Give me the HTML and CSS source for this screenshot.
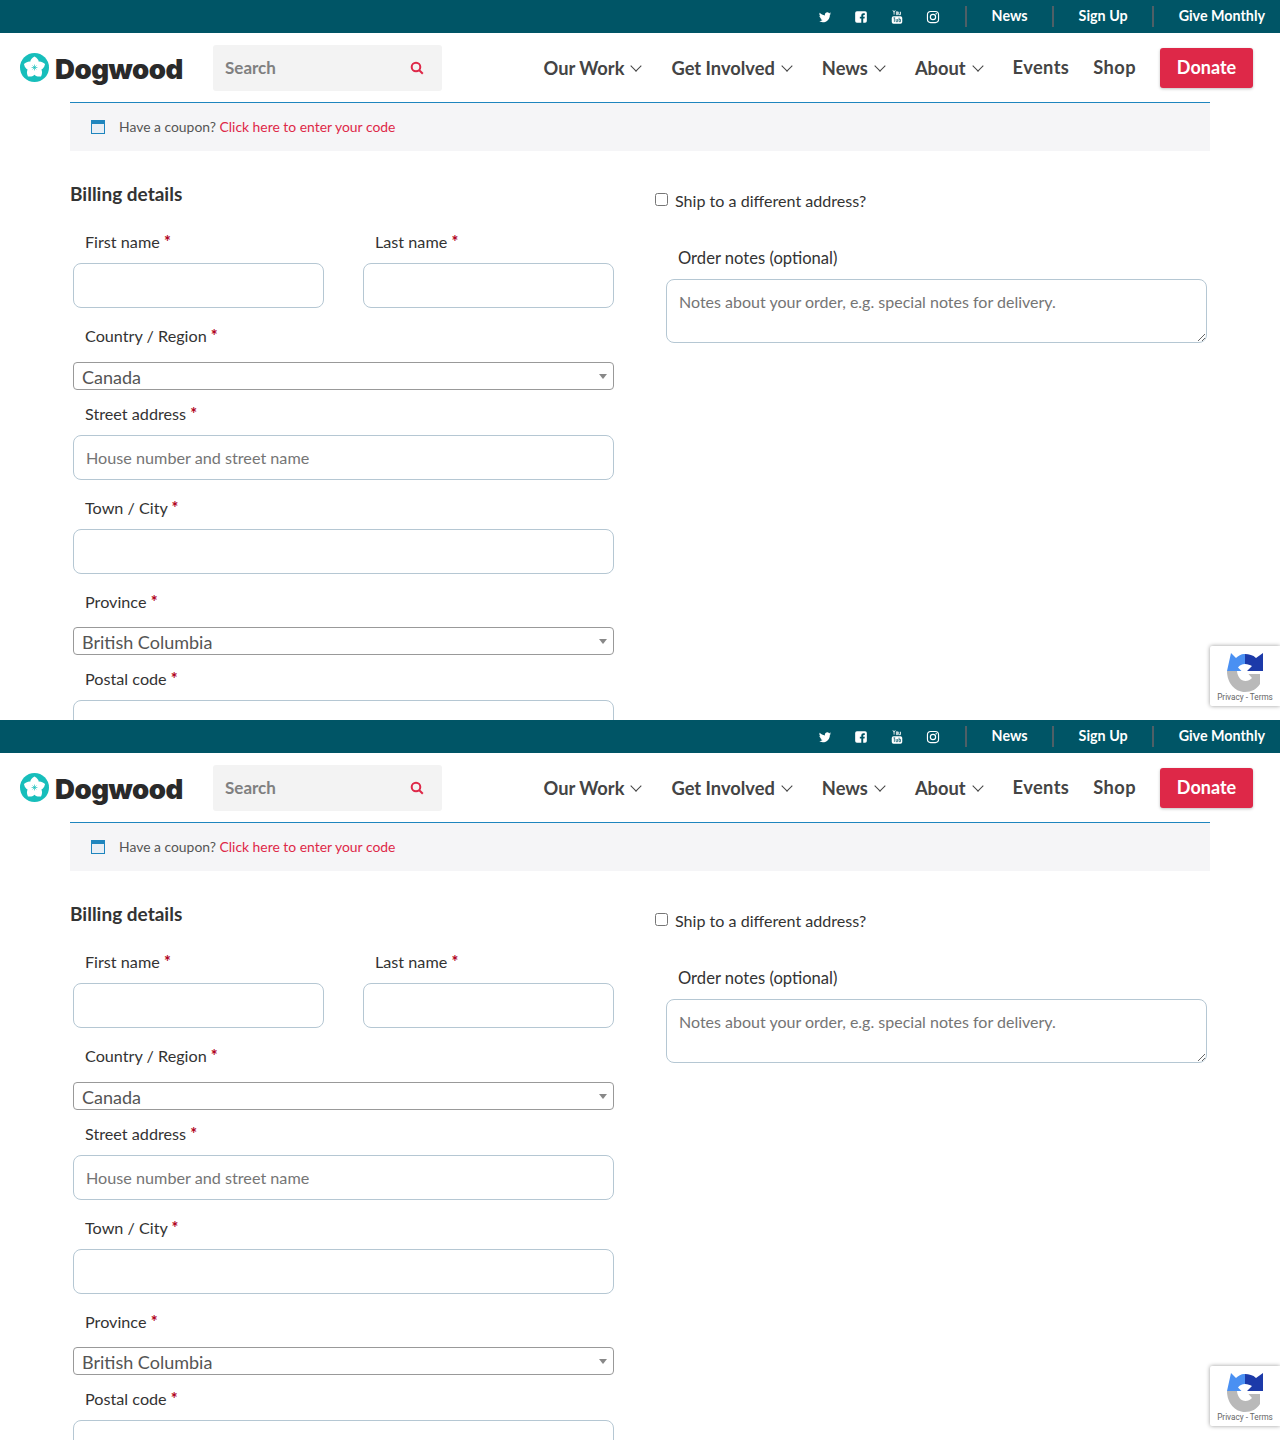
FILE: index.html
```html
<!DOCTYPE html>
<html lang="en">
<head>
<meta charset="UTF-8">
<meta name="viewport" content="width=device-width, initial-scale=1.0">
<title>Checkout - Dogwood</title>
<link rel="stylesheet" href="styles.css">
</head>
<body>

<section class="frame">
  <div class="topbar">
    <div class="social">
      <svg class="social-icon" viewBox="0 0 24 24"><path d="M22.46 6c-.77.35-1.6.58-2.46.69.88-.53 1.56-1.37 1.88-2.38-.83.5-1.75.85-2.72 1.05C18.37 4.5 17.26 4 16 4c-2.35 0-4.27 1.92-4.27 4.29 0 .34.04.67.11.98C8.28 9.09 5.11 7.38 3 4.79c-.37.63-.58 1.37-.58 2.15 0 1.49.75 2.81 1.91 3.56-.71 0-1.37-.2-1.95-.5v.03c0 2.08 1.48 3.82 3.44 4.21a4.22 4.22 0 0 1-1.93.07 4.28 4.28 0 0 0 4 2.98 8.521 8.521 0 0 1-5.33 1.84c-.34 0-.68-.02-1.02-.06C3.44 20.29 5.7 21 8.12 21 16 21 20.33 14.46 20.33 8.79c0-.19 0-.37-.01-.56.84-.6 1.56-1.36 2.14-2.23z"/></svg>
      <svg class="social-icon" viewBox="0 0 24 24"><path d="M19 2H5a3 3 0 0 0-3 3v14a3 3 0 0 0 3 3h7.500v-7.500H10v-3h2.500V9a3.500 3.500 0 0 1 3.500-3.500h2.500v3H17c-.8 0-1.200.4-1.200 1.200v1.800h2.700l-.5 3h-2.200V22H19a3 3 0 0 0 3-3V5a3 3 0 0 0-3-3z"/></svg>
      <svg class="social-icon" viewBox="0 0 24 24"><rect x="3" y="10.500" width="18" height="13" rx="3"/><path class="tube-lines" d="M6 13.500h3M7.500 13.500v7M10.500 15.500v4.500h2.500v-4.500M15.500 13v7h2.500v-4h-2.500"/><path class="you-lines" d="M5 0.500l2 3.500 2-3.500M7 4v4M11 3h2v5h-2zM15 3v5h3v-5"/></svg>
      <svg class="social-icon outline" viewBox="0 0 24 24"><rect x="2.500" y="2.500" width="19" height="19" rx="5.500"/><circle cx="12" cy="12" r="4.500"/><circle class="dot" cx="17.500" cy="6.500" r="1.300"/></svg>
    </div>
    <a class="top-link" href="#">News</a>
    <a class="top-link" href="#">Sign Up</a>
    <a class="top-link" href="#">Give Monthly</a>
  </div>

  <header class="header">
    <a class="logo" href="#">
      <svg class="logo-mark" viewBox="0 0 30 30">
        <circle cx="15" cy="15" r="15" fill="#17bebb"/>
        <g fill="#fff">
          <path d="M15 16C9 12 9 7 15 3.500C21 7 21 12 15 16z"/>
          <path d="M15 16C9 12 9 7 15 3.500C21 7 21 12 15 16z" transform="rotate(72 15 15)"/>
          <path d="M15 16C9 12 9 7 15 3.500C21 7 21 12 15 16z" transform="rotate(144 15 15)"/>
          <path d="M15 16C9 12 9 7 15 3.500C21 7 21 12 15 16z" transform="rotate(216 15 15)"/>
          <path d="M15 16C9 12 9 7 15 3.500C21 7 21 12 15 16z" transform="rotate(288 15 15)"/>
        </g>
        <path d="M15 12v6M12 15h6M13 13l4 4M17 13l-4 4" stroke="#17bebb" stroke-width="0.700"/>
      </svg>
      <span class="logo-text">Dogwood</span>
    </a>
    <div class="search">
      <span class="search-text">Search</span>
      <svg class="search-icon" viewBox="0 0 14 14"><circle cx="6" cy="6" r="4.300"/><path d="M9 9l3.800 3.800"/></svg>
    </div>
    <nav class="nav">
      <a class="nav-link caret" href="#">Our Work</a>
      <a class="nav-link caret" href="#">Get Involved</a>
      <a class="nav-link caret" href="#">News</a>
      <a class="nav-link caret" href="#">About</a>
      <a class="nav-link nav-plain" href="#">Events</a>
      <a class="nav-link nav-plain" href="#">Shop</a>
      <a class="donate" href="#">Donate</a>
    </nav>
  </header>

  <main class="checkout">
    <div class="coupon">
      <span class="coupon-icon"></span>
      <span class="coupon-text">Have a coupon? <a class="coupon-link" href="#">Click here to enter your code</a></span>
    </div>

    <div class="columns">
      <div class="billing">
        <h3 class="billing-title">Billing details</h3>
        <div class="name-row">
          <div class="field">
            <label class="field-label">First name <abbr class="req">*</abbr></label>
            <input class="text-input" type="text">
          </div>
          <div class="field">
            <label class="field-label">Last name <abbr class="req">*</abbr></label>
            <input class="text-input" type="text">
          </div>
        </div>
        <div class="field field-select field-country">
          <label class="field-label">Country / Region <abbr class="req">*</abbr></label>
          <span class="select-box">Canada</span>
        </div>
        <div class="field">
          <label class="field-label">Street address <abbr class="req">*</abbr></label>
          <input class="text-input" type="text" placeholder="House number and street name">
        </div>
        <div class="field">
          <label class="field-label">Town / City <abbr class="req">*</abbr></label>
          <input class="text-input" type="text">
        </div>
        <div class="field field-select">
          <label class="field-label">Province <abbr class="req">*</abbr></label>
          <span class="select-box">British Columbia</span>
        </div>
        <div class="field">
          <label class="field-label">Postal code <abbr class="req">*</abbr></label>
          <input class="text-input" type="text">
        </div>
      </div>

      <div class="shipping">
        <label class="ship-toggle"><input class="ship-check" type="checkbox"> Ship to a different address?</label>
        <label class="notes-label">Order notes (optional)</label>
        <textarea class="notes" placeholder="Notes about your order, e.g. special notes for delivery."></textarea>
      </div>
    </div>
  </main>

  <div class="recaptcha">
    <svg class="recaptcha-icon" viewBox="0 0 37 39">
      <path fill="#b9b9b9" d="M0 18h10c.5 6 4 10 8.500 10 2.500 0 4.500-1 6.500-3l-3.500-4H33v10c-3 5-8.500 8-15 8C8 39 0 30 0 18z"/>
      <path fill="#4a90f2" d="M4 0l5 5c2.500-2.500 6-4.500 9-4v10c-3 0-5.500 1.500-7 3.500l3.500 3.500H0z"/>
      <path fill="#1c3aa9" d="M18 1c4 0 8 1 11 4l7-5v18H20l5-5c-2-1-4-2-7-2z"/>
    </svg>
    <span class="recaptcha-text">Privacy - Terms</span>
  </div>
</section>

<section class="frame">
  <div class="topbar">
    <div class="social">
      <svg class="social-icon" viewBox="0 0 24 24"><path d="M22.46 6c-.77.35-1.6.58-2.46.69.88-.53 1.56-1.37 1.88-2.38-.83.5-1.75.85-2.72 1.05C18.37 4.5 17.26 4 16 4c-2.35 0-4.27 1.92-4.27 4.29 0 .34.04.67.11.98C8.28 9.09 5.11 7.38 3 4.79c-.37.63-.58 1.37-.58 2.15 0 1.49.75 2.81 1.91 3.56-.71 0-1.37-.2-1.95-.5v.03c0 2.08 1.48 3.82 3.44 4.21a4.22 4.22 0 0 1-1.93.07 4.28 4.28 0 0 0 4 2.98 8.521 8.521 0 0 1-5.33 1.84c-.34 0-.68-.02-1.02-.06C3.44 20.29 5.7 21 8.12 21 16 21 20.33 14.46 20.33 8.79c0-.19 0-.37-.01-.56.84-.6 1.56-1.36 2.14-2.23z"/></svg>
      <svg class="social-icon" viewBox="0 0 24 24"><path d="M19 2H5a3 3 0 0 0-3 3v14a3 3 0 0 0 3 3h7.500v-7.500H10v-3h2.500V9a3.500 3.500 0 0 1 3.500-3.500h2.500v3H17c-.8 0-1.200.4-1.200 1.200v1.800h2.700l-.5 3h-2.200V22H19a3 3 0 0 0 3-3V5a3 3 0 0 0-3-3z"/></svg>
      <svg class="social-icon" viewBox="0 0 24 24"><rect x="3" y="10.500" width="18" height="13" rx="3"/><path class="tube-lines" d="M6 13.500h3M7.500 13.500v7M10.500 15.500v4.500h2.500v-4.500M15.500 13v7h2.500v-4h-2.500"/><path class="you-lines" d="M5 0.500l2 3.500 2-3.500M7 4v4M11 3h2v5h-2zM15 3v5h3v-5"/></svg>
      <svg class="social-icon outline" viewBox="0 0 24 24"><rect x="2.500" y="2.500" width="19" height="19" rx="5.500"/><circle cx="12" cy="12" r="4.500"/><circle class="dot" cx="17.500" cy="6.500" r="1.300"/></svg>
    </div>
    <a class="top-link" href="#">News</a>
    <a class="top-link" href="#">Sign Up</a>
    <a class="top-link" href="#">Give Monthly</a>
  </div>

  <header class="header">
    <a class="logo" href="#">
      <svg class="logo-mark" viewBox="0 0 30 30">
        <circle cx="15" cy="15" r="15" fill="#17bebb"/>
        <g fill="#fff">
          <path d="M15 16C9 12 9 7 15 3.500C21 7 21 12 15 16z"/>
          <path d="M15 16C9 12 9 7 15 3.500C21 7 21 12 15 16z" transform="rotate(72 15 15)"/>
          <path d="M15 16C9 12 9 7 15 3.500C21 7 21 12 15 16z" transform="rotate(144 15 15)"/>
          <path d="M15 16C9 12 9 7 15 3.500C21 7 21 12 15 16z" transform="rotate(216 15 15)"/>
          <path d="M15 16C9 12 9 7 15 3.500C21 7 21 12 15 16z" transform="rotate(288 15 15)"/>
        </g>
        <path d="M15 12v6M12 15h6M13 13l4 4M17 13l-4 4" stroke="#17bebb" stroke-width="0.700"/>
      </svg>
      <span class="logo-text">Dogwood</span>
    </a>
    <div class="search">
      <span class="search-text">Search</span>
      <svg class="search-icon" viewBox="0 0 14 14"><circle cx="6" cy="6" r="4.300"/><path d="M9 9l3.800 3.800"/></svg>
    </div>
    <nav class="nav">
      <a class="nav-link caret" href="#">Our Work</a>
      <a class="nav-link caret" href="#">Get Involved</a>
      <a class="nav-link caret" href="#">News</a>
      <a class="nav-link caret" href="#">About</a>
      <a class="nav-link nav-plain" href="#">Events</a>
      <a class="nav-link nav-plain" href="#">Shop</a>
      <a class="donate" href="#">Donate</a>
    </nav>
  </header>

  <main class="checkout">
    <div class="coupon">
      <span class="coupon-icon"></span>
      <span class="coupon-text">Have a coupon? <a class="coupon-link" href="#">Click here to enter your code</a></span>
    </div>

    <div class="columns">
      <div class="billing">
        <h3 class="billing-title">Billing details</h3>
        <div class="name-row">
          <div class="field">
            <label class="field-label">First name <abbr class="req">*</abbr></label>
            <input class="text-input" type="text">
          </div>
          <div class="field">
            <label class="field-label">Last name <abbr class="req">*</abbr></label>
            <input class="text-input" type="text">
          </div>
        </div>
        <div class="field field-select field-country">
          <label class="field-label">Country / Region <abbr class="req">*</abbr></label>
          <span class="select-box">Canada</span>
        </div>
        <div class="field">
          <label class="field-label">Street address <abbr class="req">*</abbr></label>
          <input class="text-input" type="text" placeholder="House number and street name">
        </div>
        <div class="field">
          <label class="field-label">Town / City <abbr class="req">*</abbr></label>
          <input class="text-input" type="text">
        </div>
        <div class="field field-select">
          <label class="field-label">Province <abbr class="req">*</abbr></label>
          <span class="select-box">British Columbia</span>
        </div>
        <div class="field">
          <label class="field-label">Postal code <abbr class="req">*</abbr></label>
          <input class="text-input" type="text">
        </div>
      </div>

      <div class="shipping">
        <label class="ship-toggle"><input class="ship-check" type="checkbox"> Ship to a different address?</label>
        <label class="notes-label">Order notes (optional)</label>
        <textarea class="notes" placeholder="Notes about your order, e.g. special notes for delivery."></textarea>
      </div>
    </div>
  </main>

  <div class="recaptcha">
    <svg class="recaptcha-icon" viewBox="0 0 37 39">
      <path fill="#b9b9b9" d="M0 18h10c.5 6 4 10 8.500 10 2.500 0 4.500-1 6.500-3l-3.500-4H33v10c-3 5-8.500 8-15 8C8 39 0 30 0 18z"/>
      <path fill="#4a90f2" d="M4 0l5 5c2.500-2.500 6-4.500 9-4v10c-3 0-5.500 1.500-7 3.500l3.500 3.500H0z"/>
      <path fill="#1c3aa9" d="M18 1c4 0 8 1 11 4l7-5v18H20l5-5c-2-1-4-2-7-2z"/>
    </svg>
    <span class="recaptcha-text">Privacy - Terms</span>
  </div>
</section>

</body>
</html>
```

FILE: styles.css
```css
body {
  margin: 0;
  font-family: "Lato", "Noto Sans", sans-serif;
  color: #333;
  background-color: #fff;
}
a {
  text-decoration: none;
}

/* One captured viewport */
.frame {
  position: relative;
  height: 720px;
  overflow: hidden;
}

/* Top bar */
.topbar {
  display: flex;
  align-items: center;
  justify-content: flex-end;
  height: 33px;
  padding-right: 15px;
  background-color: #005566;
}
.social {
  display: flex;
  gap: 22px;
  padding-right: 25px;
}
.social-icon {
  width: 14px;
  height: 14px;
  fill: #fff;
}
.social-icon.outline {
  fill: none;
  stroke: #fff;
  stroke-width: 2;
}
.social-icon .dot {
  fill: #fff;
  stroke: none;
}
.tube-lines {
  fill: none;
  stroke: #005566;
  stroke-width: 1.2;
}
.you-lines {
  fill: none;
  stroke: #fff;
  stroke-width: 1.4;
}
.top-link {
  display: flex;
  align-items: center;
  height: 21px;
  padding: 0 24px 2px 25px;
  box-sizing: border-box;
  border-left: 2px solid #4f5f66;
  color: #fff;
  font-size: 14.300px;
  font-weight: 700;
}
.top-link:last-child {
  padding-right: 0;
}

/* Header */
.header {
  display: flex;
  align-items: center;
  height: 69px;
  padding: 0 27px 0 20px;
}
.logo {
  display: flex;
  align-items: center;
  gap: 6px;
  width: 193px;
}
.logo-mark {
  width: 29px;
  height: 29px;
}
.logo-text {
  margin-top: 3px;
  color: #2a2a2a;
  font-family: "Inter", "Roboto", sans-serif;
  font-size: 27.600px;
  font-weight: 900;
  letter-spacing: -0.5px;
}
.search {
  display: flex;
  align-items: center;
  justify-content: space-between;
  width: 229px;
  height: 46px;
  margin-top: 1px;
  padding: 0 18px 0 12px;
  box-sizing: border-box;
  border-radius: 3px;
  background-color: #f3f3f3;
}
.search-text {
  margin-top: -2px;
  color: #808080;
  font-size: 17px;
  font-weight: 700;
}
.search-icon {
  width: 14px;
  height: 14px;
  fill: none;
  stroke: #de2848;
  stroke-width: 2;
}
.nav {
  display: flex;
  align-items: center;
  margin: 1px 0 0 auto;
}
.nav-link {
  display: flex;
  align-items: center;
  margin-right: 31px;
  color: #444;
  font-size: 18.300px;
  font-weight: 700;
}
.caret::after {
  content: "";
  width: 8px;
  height: 8px;
  margin: -4px 0 0 8px;
  border-right: 1px solid #444;
  border-bottom: 1px solid #444;
  box-sizing: border-box;
  transform: rotate(45deg);
}
.nav-plain {
  margin-top: -2px;
  margin-right: 24px;
  letter-spacing: 0.4px;
}
.donate {
  display: flex;
  align-items: center;
  justify-content: center;
  width: 93px;
  height: 40px;
  padding-bottom: 2px;
  box-sizing: border-box;
  border-radius: 3px;
  background-color: #de2848;
  box-shadow: 0 1px 3px rgba(0, 0, 0, 0.25);
  color: #fff;
  font-size: 18px;
  font-weight: 700;
}

/* Checkout */
.checkout {
  margin: 0 70px;
}
.coupon {
  display: flex;
  align-items: center;
  gap: 14px;
  height: 48px;
  padding-left: 21px;
  border-top: 1px solid #1e85be;
  background-color: #f5f5f7;
  color: #555;
  font-size: 13.900px;
}
.coupon-text {
  margin-top: -2px;
}
.coupon-icon {
  width: 14px;
  height: 14px;
  box-sizing: border-box;
  border: 1.500px solid #1e85be;
  border-top-width: 4px;
  background-color: #e8eef5;
}
.coupon-link {
  color: #de2848;
}
.columns {
  display: flex;
}
.billing {
  width: 544px;
  padding-left: 3px;
  box-sizing: border-box;
  margin-right: 52px;
}
.billing-title {
  margin: 30px 0 23px -3px;
  height: 26px;
  color: #333;
  font-size: 19px;
  font-weight: 700;
  line-height: 26px;
}
.name-row {
  display: flex;
  gap: 39px;
}
.name-row .field {
  flex: 1;
}
.field {
  margin-bottom: 16px;
}
.field-label {
  display: block;
  height: 24px;
  margin-bottom: 9px;
  padding-left: 12px;
  color: #333;
  font-size: 16.200px;
  line-height: 24px;
}
.req {
  color: #b00020;
  font-weight: 700;
  text-decoration: none;
}
.text-input {
  display: block;
  width: 100%;
  height: 45px;
  padding: 0 12px;
  box-sizing: border-box;
  border: 1px solid #b5c7d3;
  border-radius: 8px;
  font-family: inherit;
  font-size: 16.200px;
}
.text-input::placeholder,
.notes::placeholder {
  color: #757575;
}
.field-select {
  margin-bottom: 12px;
}
.field-select .field-label {
  margin-bottom: 13px;
}
.field-country .field-label {
  margin-bottom: 14px;
}
.select-box {
  position: relative;
  display: block;
  height: 28px;
  padding-left: 8px;
  box-sizing: border-box;
  border: 1px solid #999;
  border-radius: 4px;
  color: #555;
  font-size: 18px;
  line-height: 29px;
  overflow: hidden;
}
.select-box::after {
  content: "";
  position: absolute;
  top: 11px;
  right: 6px;
  border-top: 5px solid #888;
  border-left: 4px solid transparent;
  border-right: 4px solid transparent;
}
.shipping {
  width: 541px;
  display: flex;
  flex-direction: column;
}
.ship-toggle {
  display: flex;
  align-items: center;
  height: 24px;
  margin: 37px 0 0 -11px;
  color: #333;
  font-size: 16.100px;
}
.ship-check {
  width: 13px;
  height: 13px;
  margin: -2px 7px 0 0;
}
.notes-label {
  height: 24px;
  margin: 34px 0 9px 12px;
  color: #333;
  font-size: 16.600px;
  line-height: 24px;
}
.notes {
  height: 64px;
  padding: 11px 12px;
  box-sizing: border-box;
  border: 1px solid #b5c7d3;
  border-radius: 8px;
  font-family: inherit;
  font-size: 16px;
  line-height: 22px;
}

/* reCAPTCHA badge sits over the page */
.recaptcha {
  position: absolute;
  top: 646px;
  right: 0;
  display: flex;
  flex-direction: column;
  align-items: center;
  width: 70px;
  height: 60px;
  box-sizing: border-box;
  padding-top: 7px;
  border-radius: 2px 0 0 2px;
  background-color: #fff;
  box-shadow: 0 0 4px rgba(0, 0, 0, 0.4);
}
.recaptcha-icon {
  width: 37px;
  height: 39px;
}
.recaptcha-text {
  color: #666;
  font-family: "Roboto", sans-serif;
  font-size: 8.200px;
  line-height: 11px;
  white-space: nowrap;
}
```
